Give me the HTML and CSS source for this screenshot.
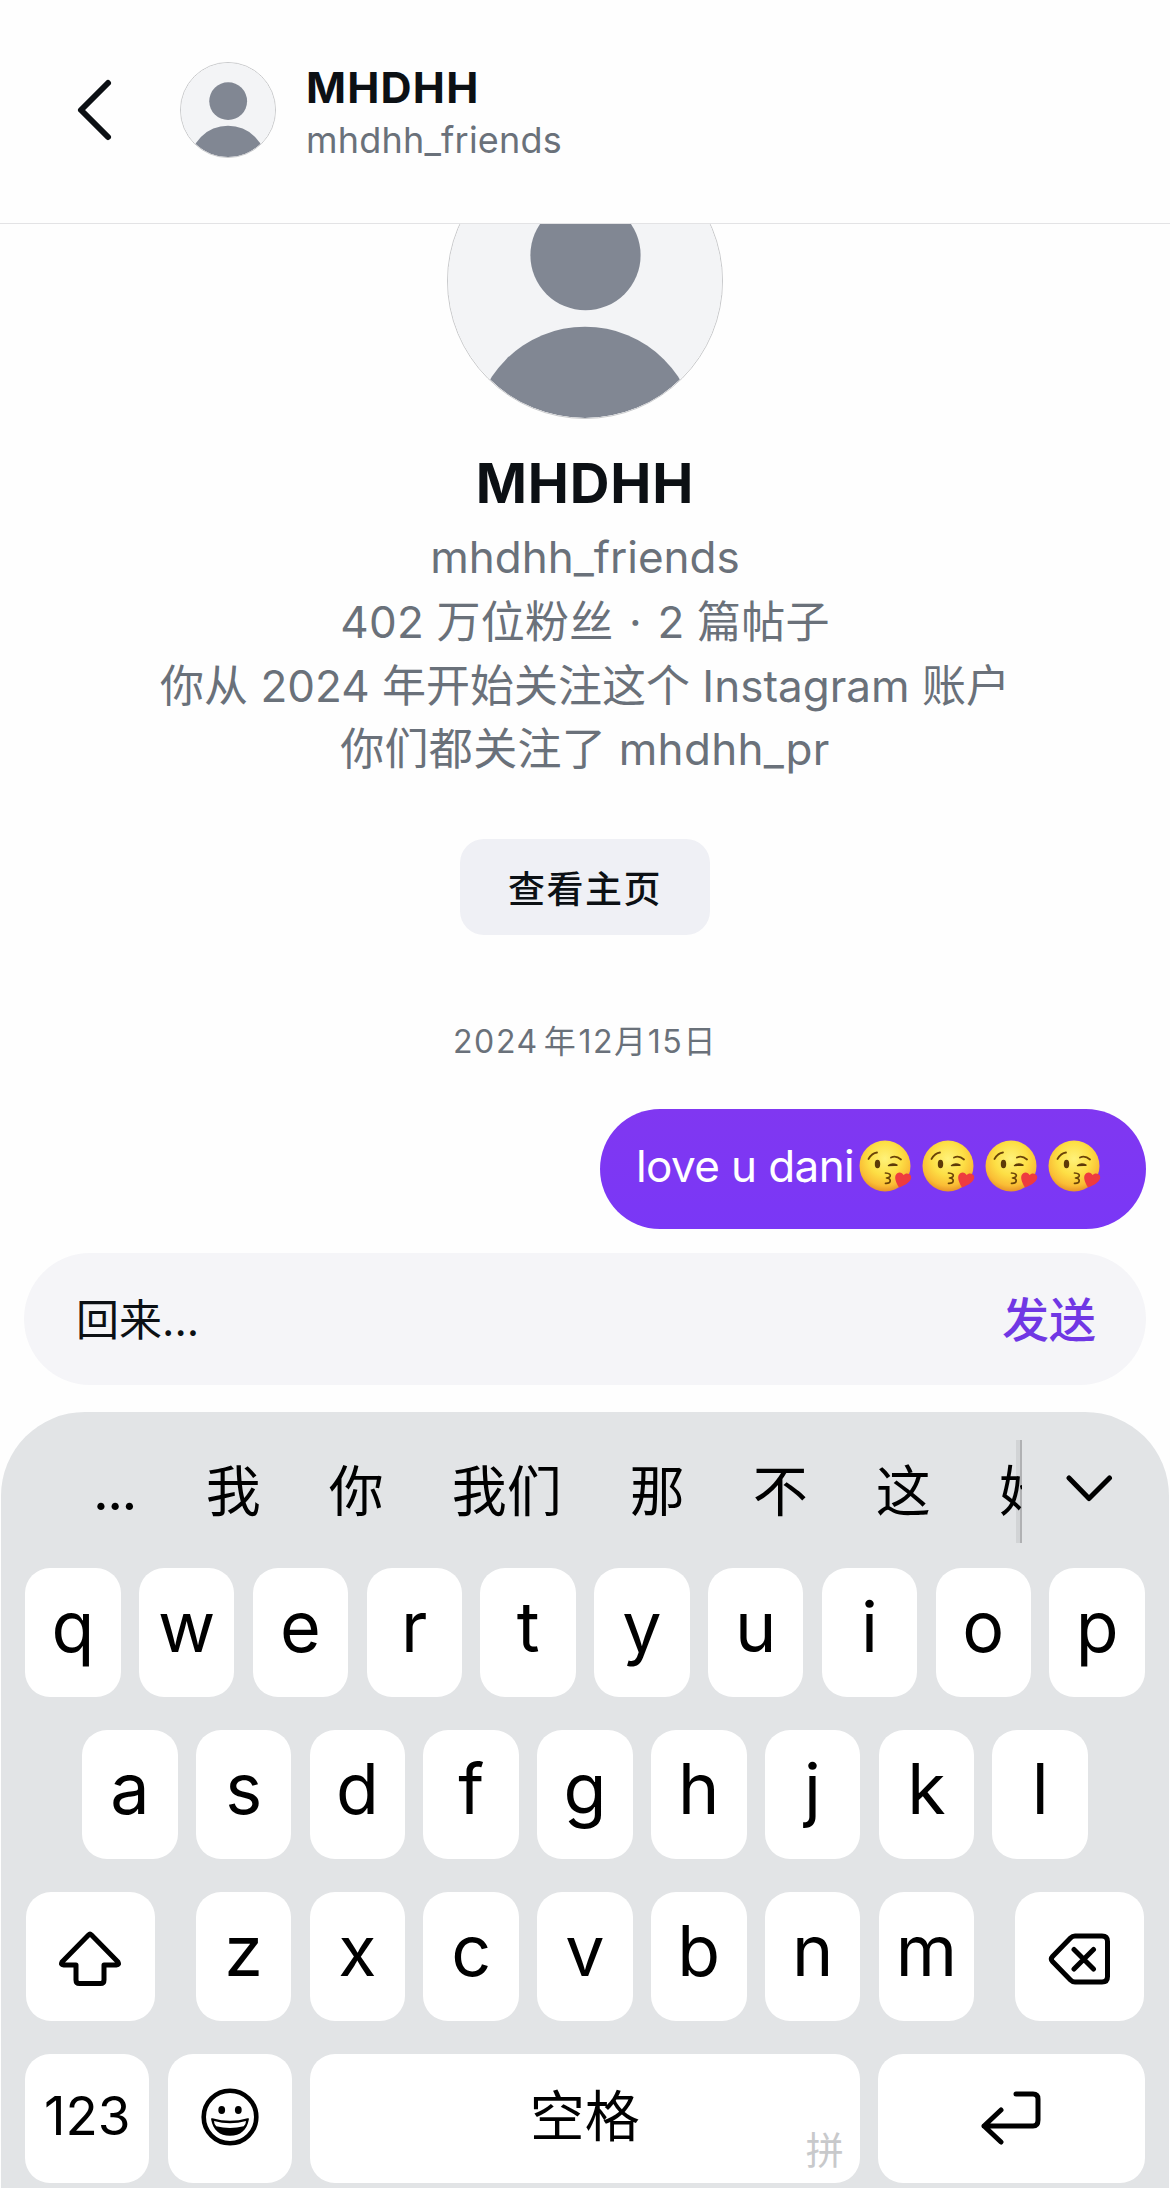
FILE: index.html
```html
<!DOCTYPE html>
<html lang="zh-CN">
  <head>
    <meta charset="UTF-8" />
    <meta name="viewport" content="width=device-width, initial-scale=1.0" />
    <title>MHDHH</title>
    <link rel="stylesheet" href="styles.css">
  </head>
  <body>
    <!-- Shared drawings -->
    <svg class="defs" width="0" height="0">
      <defs>
        <radialGradient id="face" cx="50%" cy="36%" r="64%">
          <stop offset="0" stop-color="#fff27a" />
          <stop offset="0.5" stop-color="#fddf45" />
          <stop offset="0.82" stop-color="#fabd35" />
          <stop offset="1" stop-color="#e8932a" />
        </radialGradient>
        <clipPath id="avatar-clip"><circle cx="138" cy="138" r="138" /></clipPath>
        <symbol id="avatar" viewBox="0 0 276 276">
          <g clip-path="url(#avatar-clip)">
            <rect width="276" height="276" fill="#f3f4f6" />
            <circle cx="138.5" cy="112" r="55.5" fill="#818793" />
            <circle cx="138" cy="296.500" r="112.500" fill="#818793" />
          </g>
        </symbol>
        <symbol id="kiss" viewBox="0 0 54 52">
          <circle cx="26" cy="26" r="25.500" fill="url(#face)" />
          <path d="M9.500 19q3.500-6 8.500-6.500M32 17.500q5-2.500 10 2" fill="none" stroke="#6b4408" stroke-width="1.800" stroke-linecap="round" />
          <ellipse cx="18.500" cy="24" rx="2.700" ry="4.300" fill="#5d3a08" />
          <path d="M29.500 25.500q4-3 8.500-.3-4-.2-8.500.3z" fill="#5d3a08" stroke="#5d3a08" stroke-width="1.500" stroke-linejoin="round" />
          <path d="M26.500 33q6 .5 4.500 3.500-1 1.500-3.500 1.500 3.500.3 3.700 2.500.2 3-4.700 2.800" fill="none" stroke="#6b4408" stroke-width="1.700" stroke-linecap="round" stroke-linejoin="round" />
          <path d="M40 47.500c-3-5-4.500-9-3.500-12 1.500-4 6.500-4 8-.5 2.500-3 7.500-1.500 7.700 2 .2 4-5 8-12.200 10.500z" fill="#ee3b3f" />
        </symbol>
      </defs>
    </svg>

    <header class="header">
      <svg class="back" width="40" height="64" viewBox="0 0 40 64">
        <path d="M34 5L7 32l27 27" />
      </svg>
      <div class="avatar header-avatar">
        <svg viewBox="0 0 276 276"><use href="#avatar" /></svg>
      </div>
      <div class="header-text">
        <div class="header-name">MHDHH</div>
        <div class="header-user">mhdhh_friends</div>
      </div>
    </header>

    <main class="chat">
      <div class="avatar profile-avatar">
        <svg viewBox="0 0 276 276"><use href="#avatar" /></svg>
      </div>
      <h1 class="profile-name">MHDHH</h1>
      <div class="profile-info">
        <p class="profile-user">mhdhh_friends</p>
        <p class="followers">402 万位粉丝 <span class="dot">·</span> 2 篇帖子</p>
        <p class="since">你从 2024 年开始关注这个 Instagram 账户</p>
        <p class="mutual">你们都关注了 mhdhh_pr</p>
      </div>
      <button class="profile-button">查看主页</button>
      <div class="date">2024<span class="year">年</span>12月15日</div>
      <div class="message">
        <span>love u dani</span>
        <div class="emojis">
          <svg width="54" height="52"><use href="#kiss" /></svg>
          <svg width="54" height="52"><use href="#kiss" /></svg>
          <svg width="54" height="52"><use href="#kiss" /></svg>
          <svg width="54" height="52"><use href="#kiss" /></svg>
        </div>
      </div>
    </main>

    <div class="composer">
      <span class="draft">回来...</span>
      <span class="send">发送</span>
    </div>

    <div class="keyboard">
      <div class="candidates">
        <div class="candidate-list">
          <span class="candidate dots">...</span>
          <span class="candidate">我</span>
          <span class="candidate">你</span>
          <span class="candidate">我们</span>
          <span class="candidate">那</span>
          <span class="candidate">不</span>
          <span class="candidate">这</span>
          <span class="candidate">她</span>
        </div>
        <svg class="icon expand" width="48" height="30" viewBox="0 0 48 30">
          <path d="M4 4l20 20.500L44.500 4" />
        </svg>
      </div>

      <div class="row">
        <div class="key">q</div>
        <div class="key">w</div>
        <div class="key">e</div>
        <div class="key">r</div>
        <div class="key">t</div>
        <div class="key">y</div>
        <div class="key">u</div>
        <div class="key">i</div>
        <div class="key">o</div>
        <div class="key">p</div>
      </div>
      <div class="row">
        <div class="key">a</div>
        <div class="key">s</div>
        <div class="key">d</div>
        <div class="key">f</div>
        <div class="key">g</div>
        <div class="key">h</div>
        <div class="key">j</div>
        <div class="key">k</div>
        <div class="key">l</div>
      </div>
      <div class="row">
        <div class="key shift">
          <svg class="icon" width="64" height="56" viewBox="0 0 64 56">
            <path d="M30.500 4q1.500-1.500 3 0L60 31q1.500 3-1.500 3H46v15q0 3.500-3.500 3.500h-21q-3.500 0-3.500-3.500V34H5.500Q2.500 34 4 31z" />
          </svg>
        </div>
        <div class="key">z</div>
        <div class="key">x</div>
        <div class="key">c</div>
        <div class="key">v</div>
        <div class="key">b</div>
        <div class="key">n</div>
        <div class="key">m</div>
        <div class="key backspace">
          <svg class="icon" width="66" height="56" viewBox="0 0 66 56">
            <path d="M28 5h27q5.500 0 5.500 5.500v35q0 5.500-5.500 5.500H28q-2.500 0-4.500-2L5.500 30.500q-2.300-2.500 0-5L23.500 7q2-2 4.500-2zM27 18.500l19.500 19.500M46.500 18.500L27 38" />
          </svg>
        </div>
      </div>
      <div class="row">
        <div class="key wide numbers">123</div>
        <div class="key wide">
          <svg class="smiley" width="58" height="58" viewBox="0 0 58 58">
            <circle cx="29" cy="29" r="26.300" fill="none" stroke="#000" stroke-width="4.600" />
            <ellipse cx="20.700" cy="22" rx="3.400" ry="4" />
            <ellipse cx="37.300" cy="22" rx="3.400" ry="4" />
            <path d="M11.500 30.300q17.500 5 35 0c1.500-.4 1.500.4 1.300 1.500C46 42 39.500 47.800 29 47.800S12 42 10.200 31.800c-.2-1.100-.2-1.900 1.300-1.500z" />
            <path d="M13 33q16 4.500 32 0 0 3.300-2.300 5.300-13.700 3.200-27.400 0Q13 36.300 13 33z" fill="#fff" />
          </svg>
        </div>
        <div class="key space">空格<span class="pinyin">拼</span></div>
        <div class="key return">
          <svg class="icon" width="64" height="56" viewBox="0 0 64 56">
            <path d="M37 5H54q5 0 5 5v21q0 6-5 6H5M22 21L5 37l17 16" />
          </svg>
        </div>
      </div>
    </div>
  </body>
</html>
```
FILE: styles.css
```css
* {
  box-sizing: border-box;
}
body {
  margin: 0;
  width: 1170px;
  height: 2188px;
  overflow: hidden;
  display: flex;
  flex-direction: column;
  background-color: #fefefe;
  color: #0c1014;
  font-family: Inter, "Noto Sans CJK SC", sans-serif;
}
.defs {
  position: absolute;
}
.header {
  height: 224px;
  flex: none;
  display: flex;
  align-items: flex-start;
  padding: 62px 0 0 74px;
  border-bottom: 1px solid #e3e3e5;
}
.back {
  margin-top: 16px;
  fill: none;
  stroke: #0c1014;
  stroke-width: 6;
  stroke-linecap: round;
  stroke-linejoin: round;
}
.avatar {
  flex: none;
  border-radius: 50%;
  border: 1px solid #c9cacc;
  overflow: hidden;
}
.avatar svg {
  display: block;
  width: 100%;
  height: 100%;
}
.header-avatar {
  width: 96px;
  height: 96px;
  margin-left: 66px;
}
.header-text {
  margin-left: 30px;
}
.header-name {
  font-size: 43px;
  font-weight: 700;
  line-height: 51px;
  letter-spacing: 1.2px;
}
.header-user {
  font-size: 36px;
  line-height: 55px;
  letter-spacing: 0.2px;
  color: #6a717a;
}
.chat {
  height: 1029px;
  flex: none;
  display: flex;
  flex-direction: column;
  align-items: center;
  overflow: hidden;
}
.profile-avatar {
  width: 276px;
  height: 276px;
  margin-top: -81px;
}
.profile-name {
  margin: 31px 0 0;
  font-size: 55px;
  font-weight: 700;
  line-height: 66px;
  letter-spacing: 0.9px;
}
.profile-info {
  margin-top: 10px;
  text-align: center;
  font-size: 44px;
  line-height: 63.3px;
  color: #6a717a;
}
.profile-info p {
  margin: 0;
  white-space: nowrap;
}
.profile-user {
  padding-bottom: 2px;
}
.followers {
  letter-spacing: 0.2px;
}
.dot {
  margin: 0 3px;
}
.mutual {
  letter-spacing: 0.3px;
}
.profile-button {
  width: 250px;
  height: 96px;
  flex: none;
  margin-top: 58px;
  border: none;
  border-radius: 24px;
  background-color: #eff0f5;
  color: #0c1014;
  font: 500 37px Inter, "Noto Sans CJK SC", sans-serif;
  letter-spacing: 1.5px;
}
.date {
  margin-top: 83px;
  font-size: 32px;
  line-height: 48px;
  letter-spacing: 1.6px;
  color: #6a717a;
}
.year {
  margin: 0 1px 0 5px;
}
.message {
  width: 546px;
  height: 120px;
  flex: none;
  align-self: flex-end;
  display: flex;
  align-items: center;
  margin: 43px 24px 0 0;
  padding: 0 0 7px 36px;
  border-radius: 60px;
  background: linear-gradient(#8037f1, #7a37f6);
  color: white;
  font-size: 44px;
  letter-spacing: -0.6px;
  white-space: nowrap;
}
.emojis {
  display: flex;
  flex: none;
  gap: 9px;
  margin-left: 5px;
}
.composer {
  width: 1122px;
  height: 132px;
  flex: none;
  display: flex;
  align-items: center;
  justify-content: space-between;
  margin: 0 24px;
  padding: 0 50px 5px 52px;
  border-radius: 66px;
  background-color: #f5f5f8;
}
.draft {
  font-size: 43px;
}
.send {
  font-size: 47px;
  font-weight: 500;
  color: #7037e4;
}
.keyboard {
  height: 776px;
  flex: none;
  margin: 27px 1px 0;
  border-radius: 84px 84px 0 0;
  background-color: #e2e4e6;
  color: black;
}
.icon {
  fill: none;
  stroke: black;
  stroke-width: 5;
  stroke-linecap: round;
  stroke-linejoin: round;
}
.candidates {
  height: 156px;
  display: flex;
  align-items: flex-start;
}
.candidate-list {
  width: 1021px;
  height: 103px;
  margin-top: 28px;
  padding: 0 0 10px 92px;
  display: flex;
  align-items: center;
  gap: 68px;
  overflow: hidden;
  background: linear-gradient(to right, transparent 1015px, #d2d4d6 1015px, #d2d4d6 1019px, #b0b1b3 1019px);
  font-size: 55px;
  white-space: nowrap;
}
.dots {
  padding: 6px 2px 0 0;
  letter-spacing: -1.6px;
}
.expand {
  margin: 62px 0 0 43px;
}
.row {
  display: flex;
  justify-content: center;
  gap: 18.3px;
  margin-bottom: 33px;
}
.key {
  width: 95.5px;
  height: 129px;
  flex: none;
  display: flex;
  align-items: center;
  justify-content: center;
  padding-bottom: 12px;
  border-radius: 25px;
  background-color: white;
  font-size: 70px;
}
.shift,
.backspace {
  width: 129px;
  padding: 4px 0 0;
}
.shift {
  margin-right: 22.700px;
}
.backspace {
  margin-left: 22.700px;
}
.wide {
  width: 124px;
  padding-bottom: 3px;
}
.numbers {
  font-size: 53px;
  padding-bottom: 5px;
}
.space {
  position: relative;
  width: 550px;
  padding-bottom: 14px;
  font-size: 55px;
}
.pinyin {
  position: absolute;
  right: 16px;
  bottom: 6px;
  font-size: 38px;
  line-height: 54px;
  color: #c8c9cb;
}
.return {
  width: 266.600px;
  padding-bottom: 4px;
}
```
